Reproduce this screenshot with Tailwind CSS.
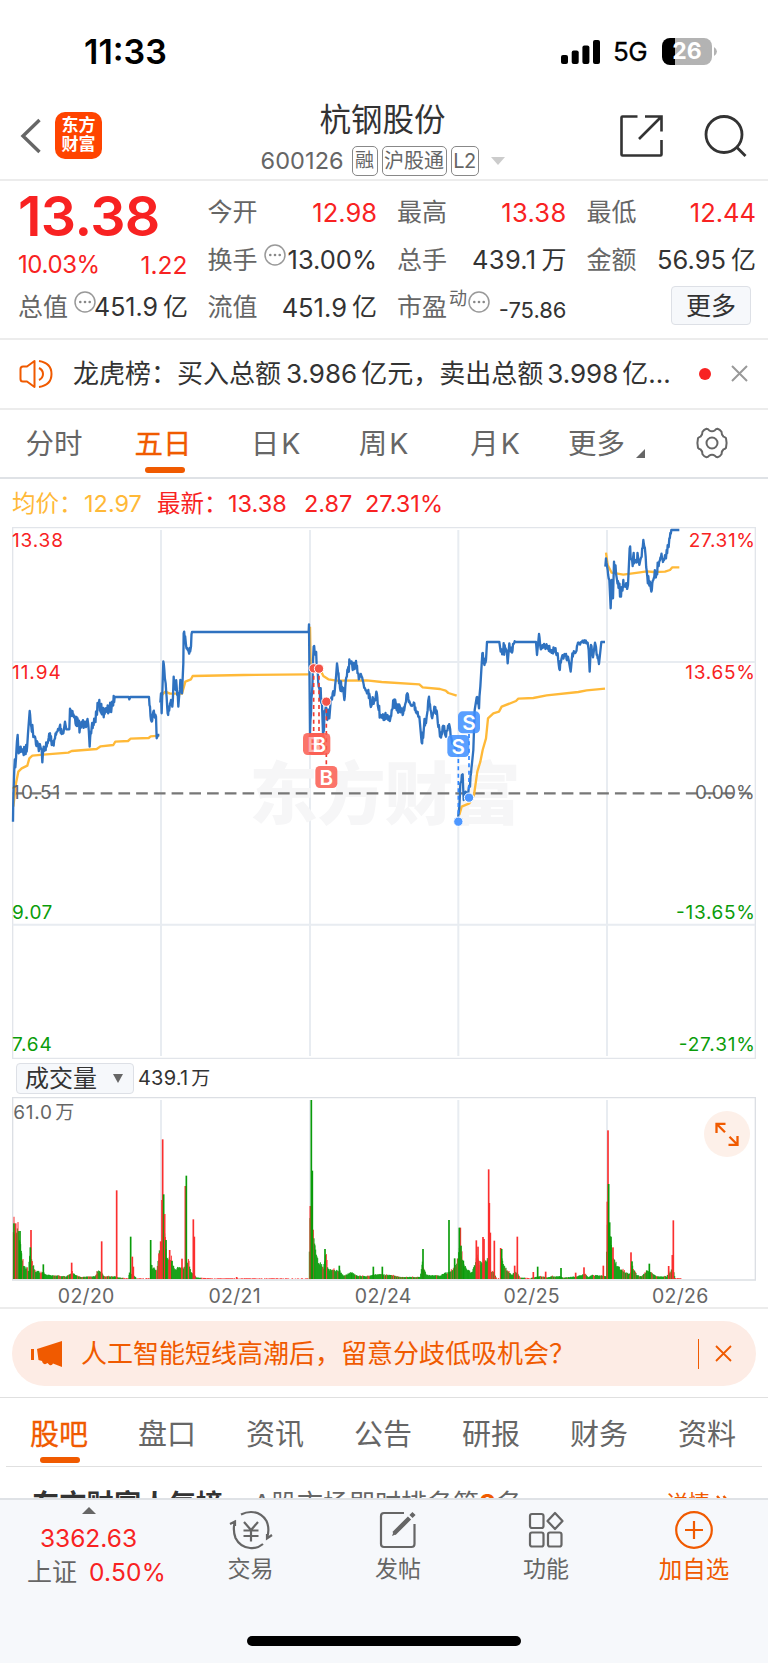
<!DOCTYPE html>
<html lang="zh-CN">
<head>
  <meta charset="UTF-8">
  <title>杭钢股份 600126</title>
  <meta name="viewport" content="width=device-width, initial-scale=1.0">
  <script src="https://cdn.jsdelivr.net/npm/@tailwindcss/browser@4"></script>
</head>
<body class="bg-white font-['Inter','Noto_Sans_CJK_SC',sans-serif] text-[#333] leading-none">
<div class="w-[768px] h-[1663px] overflow-hidden flex flex-col whitespace-nowrap">

  <!-- Status bar -->
  <div class="h-[103px] shrink-0 flex items-center justify-between pl-[84px] pr-[51px] text-black">
    <span class="text-[34px] font-semibold">11:33</span>
    <div class="flex items-center">
      <svg class="w-[40px] h-[24px]" viewBox="0 0 40 24">
        <rect x="0" y="15" width="7" height="9" rx="2"/><rect x="10.7" y="10.5" width="7" height="13.5" rx="2"/>
        <rect x="21.4" y="5.5" width="7" height="18.5" rx="2"/><rect x="32" y="0" width="7" height="24" rx="2"/>
      </svg>
      <span class="text-[26px] ml-[12px] w-[36px] tracking-[-0.5px] [-webkit-text-stroke:0.3px_black]">5G</span>
      <div class="ml-[13px] w-[50px] h-[27px] rounded-[8px] bg-linear-to-r from-black from-26% to-[#b3b3b3] to-26% text-white text-[23px] font-bold flex items-center justify-center">26</div>
      <svg class="ml-[2px] w-[3px] h-[9px]" viewBox="0 0 3 9"><path d="M0 0Q3 2 3 4.5Q3 7 0 9Z" fill="#b3b3b3"/></svg>
    </div>
  </div>

  <!-- Title bar -->
  <div class="h-[78px] shrink-0 border-b-2 border-[#ececec] flex items-center pl-[20px] pr-[21px] pb-[1px]">
    <svg class="w-[22px] h-[36px] mt-[-9px]" viewBox="0 0 22 36"><path d="M19.5 2L3 18L19.5 34" fill="none" stroke="#666" stroke-width="3.4"/></svg>
    <div class="ml-[13px] mt-[-11px] w-[47px] h-[47px] rounded-[10px] bg-[#ff4400] text-white text-[17px] leading-[19px] font-bold flex flex-col items-center justify-center"><span>东方</span><span>财富</span></div>
    <div class="flex-1 pl-[43px] mt-[-3px] flex flex-col items-center">
      <div class="text-[31.5px] leading-[34px]">杭钢股份</div>
      <div class="mt-[9px] flex items-center text-[#666]">
        <span class="text-[23.5px] w-[91px] tracking-[0.1px]">600126</span>
        <span class="border border-[#888] rounded-[5px] h-[30px] w-[26px] flex items-center justify-center text-[19px]">融</span>
        <span class="ml-[4px] border border-[#888] rounded-[5px] h-[30px] w-[65px] flex items-center justify-center text-[20px]">沪股通</span>
        <span class="ml-[4px] border border-[#888] rounded-[5px] h-[30px] w-[28px] flex items-center justify-center text-[20px] tracking-[-0.5px]">L2</span>
        <svg class="ml-[12px] w-[14px] h-[8px]" viewBox="0 0 14 8"><path d="M0 0H14L7 8Z" fill="#ccc"/></svg>
      </div>
    </div>
    <svg class="mt-[-9px] w-[44px] h-[44px]" viewBox="0 0 44 44" fill="none" stroke="#333" stroke-width="2.6">
      <path d="M17.5 2.5H2.5Q1.5 2.5 1.5 3.5V40.5Q1.5 41.5 2.5 41.5H40.5Q41.5 41.5 41.5 40.5V26M25 2.5H41.5V17.5M41 3L19 25"/>
    </svg>
    <svg class="ml-[40px] mt-[-9px] w-[43px] h-[44px]" viewBox="0 0 43 44" fill="none" stroke="#333" stroke-width="2.8">
      <circle cx="20" cy="20.5" r="18"/><path d="M32.5 33L41.5 42"/>
    </svg>
  </div>

  <!-- Quote -->
  <div class="h-[159px] shrink-0 border-b-2 border-[#ececec] pl-[18px] pr-[12px] pt-[8px] grid grid-cols-4 gap-x-[20px] text-[25px] text-[#666]">
    <div>
      <div class="h-[54px] flex items-center text-[55.5px] font-semibold text-[#f82222] tracking-[-0.6px]">13.38</div>
      <div class="h-[40px] mt-[2px] flex items-center justify-between text-[24px] text-[#f82222] tracking-[-0.4px]"><span>10.03%</span><span class="text-[24.5px] tracking-normal">1.22</span></div>
      <div class="h-[47px] mt-[-1px] flex items-center justify-between"><span>总值</span>
        <svg class="w-[22px] h-[22px] ml-[6px] mb-[12px] shrink-0" viewBox="0 0 22 22"><circle cx="11" cy="11" r="10" fill="none" stroke="#999" stroke-width="1.5"/><g fill="#888"><circle cx="6.3" cy="11" r="1.3"/><circle cx="11" cy="11" r="1.3"/><circle cx="15.7" cy="11" r="1.3"/></g></svg>
        <span class="ml-[-2px] text-[#333] flex items-center"><span class="mr-[5px]">451.9</span>亿</span></div>
    </div>
    <div>
      <div class="h-[47px] flex items-center justify-between"><span>今开</span><span class="text-[25.5px] text-[#f82222]">12.98</span></div>
      <div class="h-[48px] flex items-center"><span>换手</span>
        <svg class="w-[22px] h-[22px] ml-[6px] mb-[11px] shrink-0" viewBox="0 0 22 22"><circle cx="11" cy="11" r="10" fill="none" stroke="#999" stroke-width="1.5"/><g fill="#888"><circle cx="6.3" cy="11" r="1.3"/><circle cx="11" cy="11" r="1.3"/><circle cx="15.7" cy="11" r="1.3"/></g></svg>
        <span class="ml-auto text-[25.5px] text-[#333]">13.00%</span></div>
      <div class="h-[47px] flex items-center justify-between"><span>流值</span><span class="text-[#333] flex items-center"><span class="mr-[5px] text-[25.5px]">451.9</span>亿</span></div>
    </div>
    <div>
      <div class="h-[47px] flex items-center justify-between"><span>最高</span><span class="text-[25.5px] tracking-[0.3px] text-[#f82222]">13.38</span></div>
      <div class="h-[48px] flex items-center justify-between"><span>总手</span><span class="text-[#333] flex items-center"><span class="mr-[5px] text-[25.5px] tracking-[0.3px]">439.1</span>万</span></div>
      <div class="h-[47px] flex items-center"><span>市盈</span><span class="text-[18px] ml-[2px] mb-[17px]">动</span>
        <svg class="w-[22px] h-[22px] ml-[1px] mb-[12px] shrink-0" viewBox="0 0 22 22"><circle cx="11" cy="11" r="10" fill="none" stroke="#999" stroke-width="1.5"/><g fill="#888"><circle cx="6.3" cy="11" r="1.3"/><circle cx="11" cy="11" r="1.3"/><circle cx="15.7" cy="11" r="1.3"/></g></svg>
        <span class="ml-auto mt-[4px] text-[22px] text-[#333]">-75.86</span></div>
    </div>
    <div>
      <div class="h-[47px] flex items-center justify-between"><span>最低</span><span class="text-[25.5px] text-[#f82222]">12.44</span></div>
      <div class="h-[48px] flex items-center justify-between"><span>金额</span><span class="text-[#333] flex items-center"><span class="mr-[5px] text-[25.5px]">56.95</span>亿</span></div>
      <div class="h-[47px] flex items-center justify-end pr-[5px] pb-[4px]"><span class="w-[80px] h-[39px] shrink-0 rounded-[4px] border border-[#dde0e6] bg-[#f6f8fb] text-[#333] flex items-center justify-center pt-[1px]">更多</span></div>
    </div>
  </div>

  <!-- News line -->
  <div class="h-[70px] shrink-0 border-b-2 border-[#ececec] flex items-center pl-[19px] pr-[20px] pb-[1px]">
    <svg class="w-[34px] h-[30px]" viewBox="0 0 34 30" fill="none" stroke="#f05a00" stroke-width="2" stroke-linejoin="round">
      <path d="M15.5 2L8 7.5H4Q1.5 7.5 1.5 10V20Q1.5 22.500 4 22.500H8L15.500 28ZM20 9Q24 11 24 15Q24 19 20 21M20 2Q32.500 4 32.500 15Q32.500 26 20 28"/>
    </svg>
    <span class="ml-[20px] w-[596px] text-[26px]">龙虎榜：买入总额<span class="ml-[5px] mr-[4px]">3.986</span>亿元，卖出总额<span class="ml-[4px] mr-[4px]">3.998</span>亿...</span>
    <span class="ml-[30px] w-[12px] h-[12px] rounded-full bg-[#f82222]"></span>
    <svg class="ml-auto w-[17px] h-[17px]" viewBox="0 0 17 17"><path d="M1 1L16 16M16 1L1 16" stroke="#999" stroke-width="2"/></svg>
  </div>

  <!-- Period tabs -->
  <div class="h-[69px] shrink-0 border-b-2 border-[#dfe2e6] flex text-[28.5px] text-[#666]">
    <div class="w-[108px] flex items-center justify-center pt-[1px]">分时</div>
    <div class="w-[110px] relative flex items-center justify-center pt-[1px] text-[#f05a00] [-webkit-text-stroke:0.3px_#f05a00]">五日<span class="absolute left-[37px] bottom-[4px] w-[40px] h-[6px] rounded-[3px] bg-[#f05a00]"></span></div>
    <div class="w-[115px] flex items-center justify-center pt-[1px] gap-[2px]"><span>日</span><span>K</span></div>
    <div class="w-[101px] flex items-center justify-center pt-[1px] gap-[2px]"><span>周</span><span>K</span></div>
    <div class="w-[122px] flex items-center justify-center pt-[1px] gap-[2px]"><span>月</span><span>K</span></div>
    <div class="w-[100px] flex items-center pl-[12px] pt-[1px]">更多<svg class="ml-[11px] mt-[19px] w-[9px] h-[9px] shrink-0" viewBox="0 0 9 9"><path d="M9 0V9H0Z" fill="#666"/></svg></div>
    <div class="flex-1 flex items-center justify-center pr-[0px] pb-[1px]">
      <svg class="w-[34px] h-[32px]" viewBox="0 0 32 32" fill="none" stroke="#666" stroke-width="2" stroke-linejoin="round">
        <path d="M10.500 1.800Q12 2 13 3.200Q14.500 4.300 16 4.300Q17.500 4.300 19 3.200Q20 2 21.500 1.800Q24 2.500 25.500 4.800Q25.500 8 27.500 9.600Q29 10 30 11.200Q31.200 16 30 20.800Q29 22 27.500 22.400Q25.500 24 25.500 27.200Q24 29.500 21.500 30.200Q20 30 19 28.800Q17.500 27.700 16 27.700Q14.500 27.700 13 28.800Q12 30 10.500 30.200Q8 29.500 6.500 27.200Q6.500 24 4.500 22.400Q3 22 2 20.800Q.8 16 2 11.200Q3 10 4.500 9.600Q6.500 8 6.500 4.800Q8 2.500 10.500 1.800Z"/><circle cx="16" cy="16" r="5.500"/>
      </svg>
    </div>
  </div>

  <!-- Legend -->
  <div class="h-[48px] shrink-0 flex items-center pl-[12px] pt-[1px] text-[23.5px] text-[#f82222]">
    <span class="w-[72px] text-[#ffb938]">均价：</span><span class="w-[73px] text-[#ffb938]">12.97</span>
    <span class="w-[71px]">最新：</span><span class="w-[76px]">13.38</span><span class="w-[61px]">2.87</span><span>27.31%</span>
  </div>

  <!-- Price chart, 3 units per pixel -->
  <svg class="w-[768px] h-[532px] shrink-0" viewBox="0 21 2304 1596" font-size="57">
    <g fill="none" stroke="#e2e5ea" stroke-width="4">
      <path d="M38 1615V23H2266V1615Z"/>
      <path d="M38 426H2266M38 1214H2266M483 30V1608M930 30V1608M1375 30V1608M1821 30V1608" stroke="#e8ecf1" stroke-width="6"/>
    </g>
    <text x="748" y="898" font-size="206" font-weight="900" fill="#f6f6f7" textLength="814">东方财富</text>
    <path d="M38 820H2266" stroke="#777" stroke-width="7" stroke-dasharray="35 18.200" stroke-dashoffset="2"/>
    <g id="lines" fill="none" stroke-width="7" stroke-linejoin="round"></g>
    <g stroke-width="5" stroke-dasharray="12 10">
      <path d="M941 445V645M957 445V645M979 545V740" stroke="#f03c32"/>
      <path d="M1375 905V705M1407 830V635" stroke="#2f86ff"/>
    </g>
    <g fill="#f55448" stroke="#fff" stroke-width="3"><circle cx="941" cy="445" r="14"/><circle cx="957" cy="446" r="14"/><circle cx="979" cy="545" r="14"/></g>
    <g fill="#4d97ff" stroke="#fff" stroke-width="3"><circle cx="1375" cy="905" r="14"/><circle cx="1407" cy="833" r="14"/></g>
    <g fill="#fa5c50" fill-opacity=".85"><rect x="909" y="639" width="66" height="66" rx="14"/><rect x="925" y="639" width="66" height="66" rx="14"/><rect x="946" y="738" width="66" height="66" rx="14"/></g>
    <g fill="#3d8eff" fill-opacity=".85"><rect x="1342" y="645" width="66" height="66" rx="14"/><rect x="1374" y="574" width="66" height="66" rx="14"/></g>
    <g fill="#fff" font-weight="600" text-anchor="middle" font-size="62">
      <text x="942" y="695" fill-opacity=".5">B</text><text x="958" y="695">B</text><text x="979" y="794">B</text><text x="1375" y="701">S</text><text x="1407" y="630">S</text>
    </g>
    <g fill="#f82222"><text x="36" y="80" textLength="153">13.38</text><text x="36" y="478" textLength="146">11.94</text></g>
    <g fill="#f82222"><text x="2066" y="80" textLength="199">27.31%</text><text x="2056" y="478" textLength="209">13.65%</text></g>
    <text x="36" y="838" fill="#666" textLength="145">10.51</text><text x="2085" y="838" fill="#666" textLength="179">0.00%</text>
    <g fill="#0a9c0a"><text x="36" y="1196" textLength="121">9.07</text><text x="36" y="1592" textLength="119">7.64</text></g>
    <g fill="#0a9c0a"><text x="2028" y="1196" textLength="237">-13.65%</text><text x="2036" y="1592" textLength="229">-27.31%</text></g>
  </svg>

  <!-- Volume header -->
  <div class="h-[38px] shrink-0 flex items-center pl-[16px]">
    <div class="w-[118px] h-[31px] rounded-[4px] border border-[#dde0e6] bg-[#f6f8fb] flex items-center pl-[8px] pt-[2px] text-[24px]">成交量<svg class="ml-[16px] mt-[-2px] w-[10px] h-[9px]" viewBox="0 0 10 9"><path d="M0 0H10L5 9Z" fill="#666"/></svg></div>
    <span class="ml-[4px] text-[20px] flex items-center"><span class="mr-[3px] tracking-[0.2px]">439.1</span><span class="text-[19px]">万</span></span>
  </div>

  <!-- Volume chart -->
  <div class="relative h-[184px] shrink-0">
    <svg class="w-[768px] h-[184px]" viewBox="0 141 2304 552" font-size="57">
      <path d="M483 150V690M930 150V690M1375 150V690M1821 150V690" stroke="#e8ecf1" stroke-width="6"/>
      <path d="M38 690V143H2266V690Z" fill="none" stroke="#dcdfe4" stroke-width="4"/>
      <g id="bars"></g>
      <text x="40" y="207" fill="#666" textLength="116">61.0</text><text x="166" y="207" fill="#666">万</text>
    </svg>
    <svg class="absolute left-[704px] top-[14px] w-[46px] h-[46px]" viewBox="0 0 46 46"><circle cx="23" cy="23" r="23" fill="#fdf0e9"/><path d="M12.500 22V12.800H21.500M13 13.300L21 21.300M24.500 33.800H33.500V25M33 33.300L25.500 25.800" fill="none" stroke="#f05a00" stroke-width="2.300"/></svg>
  </div>

  <!-- Dates -->
  <div class="h-[28px] shrink-0 border-b-2 border-[#ececec] flex pl-[12px] pt-[4px] text-[19.5px] leading-[22px] tracking-[0.3px] text-[#666]">
    <span class="w-[148.500px] text-center">02/20</span><span class="w-[148.500px] text-center">02/21</span><span class="w-[148.500px] text-center">02/24</span><span class="w-[148.500px] text-center">02/25</span><span class="w-[148.500px] text-center">02/26</span>
  </div>

  <!-- Tip banner -->
  <div class="h-[89px] shrink-0 border-b border-[#e0e0e0] px-[12px] pt-[12px]">
    <div class="h-[65px] rounded-full bg-[#fdece5] text-[#f05a00] flex items-center pl-[19px] pr-[24px]">
      <svg class="w-[32px] h-[26px]" viewBox="0 0 32 26" fill="#f05a00"><path d="M0 8H3V19H0ZM6 8L31 0V26L22 22.500Q21 25 18.500 24L16.500 22Q13.500 24.500 11.500 21.500L11 20L7.500 19Z"/></svg>
      <span class="ml-[18px] pt-[1px] text-[26px]">人工智能短线高潮后，留意分歧低吸机会？</span>
      <span class="ml-auto w-[1.500px] h-[30px] bg-[#f05a00]"></span>
      <svg class="ml-[16px] w-[17px] h-[17px]" viewBox="0 0 17 17"><path d="M1 1L16 16M16 1L1 16" stroke="#f05a00" stroke-width="1.800"/></svg>
    </div>
  </div>

  <!-- Content tabs -->
  <div class="mx-[6px] h-[69px] shrink-0 border-b border-[#e0e0e0] flex text-[29px] text-[#666]">
    <div class="w-[108px] relative flex items-center justify-center pt-[4px] pr-[2px] text-[#f05a00] [-webkit-text-stroke:0.3px_#f05a00]">股吧<span class="absolute left-[34px] bottom-[3px] w-[40px] h-[6px] rounded-[3px] bg-[#f05a00]"></span></div>
    <div class="w-[108px] flex items-center justify-center pt-[4px] pr-[2px]">盘口</div>
    <div class="w-[108px] flex items-center justify-center pt-[4px] pr-[2px]">资讯</div>
    <div class="w-[108px] flex items-center justify-center pt-[4px] pr-[2px]">公告</div>
    <div class="w-[108px] flex items-center justify-center pt-[4px] pr-[2px]">研报</div>
    <div class="w-[108px] flex items-center justify-center pt-[4px] pr-[2px]">财务</div>
    <div class="w-[108px] flex items-center justify-center pt-[4px] pr-[2px]">资料</div>
  </div>

  <!-- Popularity row, cut by the bottom bar -->
  <div class="h-[31px] shrink-0 overflow-hidden flex items-start pl-[32px] pr-[36px] pt-[24px]">
    <span class="text-[27.300px] font-bold">东方财富人气榜</span>
    <span class="ml-[30px] text-[26px] text-[#666]">A股市场即时排名第<b class="text-[#f05a00]">8</b>名</span>
    <span class="ml-auto mt-[1px] w-[66px] text-[22px] text-[#f05a00] flex items-start">详情<svg class="ml-[6px] mt-[3px] w-[15px] h-[16px]" viewBox="0 0 15 16" fill="none" stroke="#f05a00" stroke-width="2.400"><path d="M1 1L7 8L1 15M7.500 1L13.500 8L7.500 15"/></svg></span>
  </div>

  <!-- Bottom bar -->
  <div class="flex-1 border-t-2 border-[#dfe2e6] bg-[#f6f8fb] flex flex-col items-center text-[24px] text-[#666]">
    <div class="w-full h-[94px] flex">
      <div class="w-[177px] pt-[7px] flex flex-col items-center">
        <svg class="w-[14px] h-[7px]" viewBox="0 0 14 7"><path d="M7 0L14 7H0Z" fill="#666"/></svg>
        <span class="mt-[12px] text-[24.500px] text-[#f82222]">3362.63</span>
        <div class="mt-[9px] w-full pl-[27px] flex items-center text-[25px]"><span>上证</span><span class="ml-[12px] text-[24.500px] tracking-[0.2px] text-[#f82222]">0.50%</span></div>
      </div>
      <div class="w-[147px] pt-[10px] flex flex-col items-center">
        <svg class="w-[44px] h-[40px]" viewBox="0 0 44 40" fill="none" stroke="#666" stroke-width="2.200">
          <path d="M12 4.500Q17 2 22 2Q32 2 37.500 11Q41 19 38 28M43 25L38 28.500V24M34 34Q28 39 21 38Q11 37 6.500 28Q3.500 20 6 11M1 14L6 11.500V16"/>
          <path d="M15 12L22 20L29 12M22 20V31.500M14.500 20.500H29.500M14.500 26H29.500"/>
        </svg>
        <span class="mt-[8px] text-[23px]">交易</span>
      </div>
      <div class="w-[148px] pt-[10px] flex flex-col items-center">
        <svg class="w-[40px] h-[40px]" viewBox="0 0 40 40" fill="none" stroke="#666" stroke-width="2.200">
          <path d="M26 3H6Q3 3 3 6V34Q3 37 6 37H33.500Q36.500 37 36.500 34V14"/><path d="M16 23.500L31.500 8M33 6.500L36 3.500" stroke-width="4.500"/><path d="M14 26L17.500 24.500L15.500 22Z" fill="#666" stroke="none"/>
        </svg>
        <span class="mt-[8px] text-[23px]">发帖</span>
      </div>
      <div class="w-[148px] pt-[10px] flex flex-col items-center">
        <svg class="w-[36px] h-[40px]" viewBox="0 0 36 40" fill="none" stroke="#666" stroke-width="2.200" stroke-linejoin="round">
          <rect x="2" y="4" width="13.500" height="14" rx="2"/><path d="M27 3L34.500 11L27 19L19.500 11Z"/><rect x="2" y="22.500" width="13.500" height="14" rx="2"/><rect x="20" y="22.500" width="13.500" height="14" rx="2"/>
        </svg>
        <span class="mt-[8px] text-[23px]">功能</span>
      </div>
      <div class="w-[148px] pt-[10px] flex flex-col items-center text-[#f05a00]">
        <svg class="w-[40px] h-[40px]" viewBox="0 0 40 40" fill="none" stroke="#f05a00" stroke-width="2.200"><circle cx="20" cy="20" r="17.800"/><path d="M20 11V29M11 20H29"/></svg>
        <span class="mt-[8px] text-[23.500px]">加自选</span>
      </div>
    </div>
    <div class="mt-[42px] w-[274px] h-[10px] rounded-full bg-black"></div>
  </div>
</div>

<script>
  // seeded random so the lines look the same on every load
  let seed = 7;
  const rnd = () => (seed = (seed * 16807) % 2147483647) / 2147483647;

  // [x, y, jitter] per trading day
  const price = [
    [[39,905],[40,830],[43,745],[48,715,18],[53,645],[56,700,12],[62,680,22],[68,690,22],[80,695,15],[84,640],[89,573],[94,620,10],[105,650,18],[115,680,18],[125,690,10],[127,727],[131,680,14],[140,680,14],[150,640],[155,675,14],[165,655,16],[179,620,16],[190,640,14],[195,605],[199,628],[208,628],[210,566],[222,592,18],[240,622,16],[255,605,16],[265,615,10],[269,680],[275,622,16],[285,600,18],[295,550,14],[308,575,16],[320,575,18],[335,560,14],[344,531],[386,531],[388,538],[391,531],[447,531],[450,560,14],[455,605],[460,575,12],[468,590,12],[470,655],[474,645],[478,645]],
    [[481,548],[483,520],[485,580],[490,424],[497,490,10],[503,580],[510,550,24],[517,560,16],[521,470],[530,500,24],[535,560],[541,480,18],[546,520],[550,430],[551,340],[558,375,20],[566,395,18],[573,380,16],[576,336],[926,336],[927,313],[930,640],[936,520,30],[941,380],[947,405,16],[953,450,24],[959,510,24],[966,550,18],[969,640],[976,570,24],[982,600,20],[990,570,18],[998,520,10],[1004,515,10],[1011,430],[1017,490,18],[1026,500,18],[1033,540],[1042,450,18],[1050,428],[1058,450,16],[1068,423],[1075,460,18],[1085,470,16],[1095,505,16],[1105,510,14],[1115,555,18],[1129,515],[1136,570,12],[1143,585,20],[1155,585,18],[1165,600,12],[1172,590,10],[1181,540,10],[1190,570,16],[1200,560,14],[1208,585],[1215,555,10],[1222,520],[1230,550,10],[1240,555,10],[1250,580,14],[1258,590],[1265,668],[1272,620,20],[1280,590,10],[1287,530],[1295,590,10],[1303,560,14],[1312,590,10],[1320,650],[1328,620,16],[1338,650,16],[1346,618],[1355,660,14],[1370,680,14]],
    [[1373,905],[1378,860],[1381,790,12],[1388,763],[1391,840],[1397,815,14],[1403,830],[1410,800,16],[1416,730],[1420,690],[1424,570],[1430,532],[1437,565,14],[1441,500],[1447,400],[1452,430,10],[1458,420],[1461,366],[1498,366],[1502,395],[1508,388,16],[1517,385,18],[1523,430],[1528,370],[1533,395,16],[1541,372,12],[1546,366],[1608,366],[1611,405],[1617,342],[1621,380,8],[1632,372,12],[1642,380,6],[1653,390,12],[1665,395,12],[1673,400,6],[1678,447],[1686,410,16],[1695,405,14],[1706,420],[1712,455],[1717,400,6],[1728,395,12],[1737,368,4],[1750,368,8],[1763,368],[1766,390],[1769,455],[1773,375,8],[1779,412],[1785,368],[1790,405,12],[1797,432],[1804,366],[1815,366]],
    [[1816,140],[1818,115],[1823,150,12],[1828,180,10],[1832,265],[1835,180],[1839,235],[1842,125],[1848,160,20],[1857,190,20],[1863,230],[1870,180,20],[1877,200,18],[1884,195],[1889,85],[1895,118,22],[1905,120,22],[1915,118,20],[1925,110,18],[1930,60],[1937,110,10],[1942,170,18],[1950,185,14],[1954,215],[1960,180,14],[1970,155,20],[1980,120,18],[1992,120,22],[2000,90,18],[2008,55,18],[2014,30],[2038,30]]
  ];
  const average = [
    [[40,860],[48,790],[55,755],[65,745],[82,737],[88,715],[97,707],[130,704],[205,698],[215,693],[290,687],[302,679],[340,675],[346,665],[384,663],[392,656],[446,654],[452,649],[478,647]],
    [[486,525],[496,515],[510,521],[546,521],[556,485],[573,478],[578,468],[730,465],[926,463]],
    [[930,320],[932,430],[960,447],[970,468],[985,478],[1010,482],[1100,481],[1145,486],[1258,493],[1268,502],[1320,507],[1337,512],[1345,519],[1370,527]],
    [[1378,885],[1385,860],[1408,850],[1422,825],[1432,755],[1441,725],[1448,690],[1458,655],[1464,595],[1480,580],[1497,575],[1505,560],[1548,543],[1555,536],[1600,534],[1640,526],[1735,516],[1760,511],[1815,506]],
    [[1818,98],[1823,135],[1835,158],[1870,164],[1920,157],[1940,154],[1960,156],[1995,155],[2010,150],[2017,142],[2038,142]]
  ];

  function pricePath(day) {
    let d = `M${day[0][0]} ${day[0][1]}`;
    for (let i = 1; i < day.length; i++) {
      const [x0, y0, j0 = 0] = day[i - 1], [x1, y1, j1 = 0] = day[i];
      const j = Math.max(j0, j1);
      for (let x = x0 + 1.5; j && x < x1 - 1; x += 1.5) {
        const y = y0 + (y1 - y0) * (x - x0) / (x1 - x0) + (rnd() * 2 - 1) * j;
        d += `L${x} ${y.toFixed(1)}`;
      }
      d += `L${x1} ${y1}`;
    }
    return `<path d="${d}" stroke="#2f72c0"/>`;
  }
  document.getElementById('lines').innerHTML =
    average.map(a => `<path d="M${a.join('L')}" stroke="#ffb938"/>`).join('') + price.map(pricePath).join('');

  // [x, typical height]
  const volume = [[40,155],[50,150],[60,130],[65,75],[72,40],[85,25],[90,80],[95,60],[105,25],[130,20],[140,12],[200,8],[215,20],[240,6],[285,8],[292,25],[305,20],[312,8],[345,8],[352,5],[385,2],[388,20],[404,8],[410,2],[450,3],[454,40],[470,25],[478,80],[483,90],[490,160],[500,75],[515,55],[525,30],[535,35],[545,35],[555,35],[565,50],[575,18],[582,15],[590,4],[640,2],[926,2],[930,180],[940,120],[945,100],[955,55],[970,35],[977,75],[985,30],[1000,25],[1020,25],[1030,10],[1055,20],[1070,10],[1100,8],[1120,12],[1140,15],[1170,12],[1200,6],[1260,6],[1267,50],[1272,30],[1280,12],[1320,10],[1335,18],[1350,20],[1362,35],[1372,50],[1380,100],[1390,45],[1405,25],[1415,20],[1425,45],[1432,80],[1440,50],[1450,55],[1462,60],[1470,30],[1480,20],[1490,3],[1500,3],[1504,80],[1512,40],[1525,22],[1535,12],[1545,20],[1552,20],[1560,4],[1590,3],[1620,8],[1630,8],[1640,4],[1655,8],[1680,8],[1690,4],[1730,8],[1755,15],[1765,5],[1775,12],[1805,10],[1818,8],[1823,200],[1830,120],[1840,60],[1850,45],[1865,25],[1890,15],[1898,40],[1910,12],[1925,8],[1940,25],[1955,20],[1970,8],[2000,8],[2015,30],[2020,30],[2025,3],[2045,2]];
  // [x, top, up]
  const spikes = [[42,520,0],[47,520,1],[60,543,0],[93,540,1],[91,592,0],[130,643,0],[215,638,1],[305,574,1],[350,421,1],[392,560,0],[397,620,1],[400,650,1],[452,570,0],[477,610,1],[482,574,1],[486,450,1],[488,268,1],[491,433,0],[494,492,1],[498,570,0],[509,600,1],[546,626,1],[556,408,1],[559,377,0],[580,508,1],[583,560,1],[710,681,1],[931,468,1],[937,362,0],[934,150,0],[975,597,0],[1018,647,0],[1120,650,0],[1147,650,0],[1269,597,0],[1347,510,0],[1364,625,0],[1381,533,1],[1378,533,0],[1383,587,0],[1390,632,0],[1429,571,1],[1434,590,1],[1449,561,1],[1452,567,1],[1466,358,1],[1468,459,1],[1471,548,1],[1483,572,1],[1502,594,1],[1505,597,0],[1552,560,1],[1544,647,1],[1600,666,1],[1613,650,0],[1637,665,1],[1683,654,0],[1727,668,1],[1752,652,1],[1810,647,1],[1822,455,1],[1824,241,1],[1826,402,0],[1829,517,0],[1833,560,0],[1839,592,1],[1893,607,1],[1896,634,0],[1948,641,0],[2006,648,1],[2017,615,1],[2020,511,1]];
  const bar = (x, h, up, w = 3) => `<rect x="${x - w / 2}" y="${(687 - h).toFixed(1)}" width="${w}" height="${h.toFixed(1)}" fill="${up ? '#fb2f2f' : '#0a9c0a'}"/>`;
  let out = '';
  for (let i = 1; i < volume.length; i++) {
    const [x0, h0] = volume[i - 1], [x1, h1] = volume[i];
    for (let x = x0; x < x1; x += 2) {
      const h = h0 + (h1 - h0) * (x - x0) / (x1 - x0);
      const quiet = h <= 3.5;
      if (quiet && rnd() < 0.3) continue;
      const up = quiet || rnd() < 0.18;
      out += bar(x, h * (up && !quiet ? 0.75 + rnd() * 0.55 : 0.85 + rnd() * 0.25), up);
    }
  }
  out += spikes.map(s => bar(s[0], 687 - s[1], s[2], 5)).join('');
  document.getElementById('bars').innerHTML = out;
</script>
</body>
</html>
